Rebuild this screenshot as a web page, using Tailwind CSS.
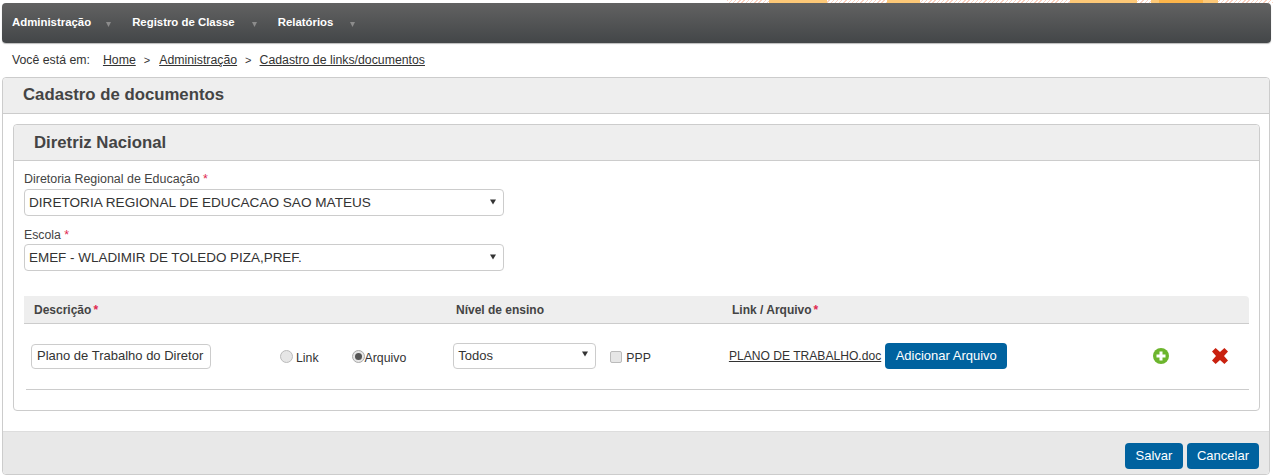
<!DOCTYPE html>
<html lang="pt-BR">
<head>
  <meta charset="UTF-8">
  <title>Cadastro de documentos</title>
  <script src="https://cdn.jsdelivr.net/npm/@tailwindcss/browser@4"></script>
</head>
<body class="bg-white font-['Liberation_Sans',Arial,sans-serif] text-[12.3px] text-[#444] w-[1273px] h-[476px] overflow-hidden relative">
  <!-- faixa do topo atras do menu -->
  <div class="absolute top-0 left-0 w-full h-[3px] flex">
    <div class="w-[727px]"></div>
    <div class="flex-1 bg-[repeating-linear-gradient(135deg,#fbd3c2_0,#fbd3c2_1px,#fff_1px,#fff_3px)] relative">
      <div class="absolute left-[42px] w-[58px] h-full bg-[#fdc877]"></div>
      <div class="absolute left-[160px] w-[33px] h-full bg-[#fdc877]"></div>
      <div class="absolute left-[343px] w-[67px] h-full bg-[#fdc877]"></div>
      <div class="absolute left-[424px] w-[67px] h-full bg-[#fdc877]"></div>
      <div class="absolute left-[432px] w-[44px] h-full bg-[#fdb54a]"></div>
    </div>
  </div>

  <div class="pt-[3px] pl-[2px] pr-[2px]">
    <nav class="h-10 rounded-[4px] bg-linear-to-b from-[#626262] to-[#434648] shadow-[0_1px_1px_#bbb] flex items-center text-white font-bold text-[11.4px]">
      <a class="ml-[10px] mb-[1px]">Administração</a>
      <svg class="ml-[15px] mt-[3px]" width="5" height="5" viewBox="0 0 5 5"><path d="M0 0h5L2.5 5Z" fill="#8c8c8c"/></svg>
      <a class="ml-[21px] mb-[1px]">Registro de Classe</a>
      <svg class="ml-[17px] mt-[3px]" width="5" height="5" viewBox="0 0 5 5"><path d="M0 0h5L2.5 5Z" fill="#8c8c8c"/></svg>
      <a class="ml-[21px] mb-[1px]">Relatórios</a>
      <svg class="ml-[17px] mt-[3px]" width="5" height="5" viewBox="0 0 5 5"><path d="M0 0h5L2.5 5Z" fill="#8c8c8c"/></svg>
    </nav>

    <div class="h-[34px] flex items-center pl-[10px] text-[#333]">
      <span>Você está em:</span>
      <a class="ml-[13px] underline">Home</a>
      <span class="ml-[8px] mr-[9px] text-[11px]">&gt;</span>
      <a class="underline">Administração</a>
      <span class="mx-[8px] text-[11px]">&gt;</span>
      <a class="underline">Cadastro de links/documentos</a>
    </div>

    <main class="w-[1268px] h-[398px] border border-[#ccc] rounded-[4px] flex flex-col">
      <h1 class="h-[36px] shrink-0 bg-[#eee] border-b border-[#ccc] flex items-center pl-5 pb-[2px] text-[16.75px] font-bold text-[#444] rounded-t-[4px]">Cadastro de documentos</h1>

      <div class="flex-1 px-[10px] pt-[10px]">
        <section class="w-[1247px] h-[287px] border border-[#ccc] rounded-[4px] flex flex-col">
          <h2 class="h-[36px] shrink-0 bg-[#eee] border-b border-[#ccc] flex items-center pl-5 text-[16.75px] font-bold text-[#444] rounded-t-[4px]">Diretriz Nacional</h2>

          <div class="px-[10px]">
            <label class="block mt-[11px] leading-[14px] text-[12.45px]">Diretoria Regional de Educação <span class="text-[#e0284f]">*</span></label>
            <div class="mt-[3px] w-[480px] h-[27px] border border-[#ccc] rounded-[4px] flex items-center justify-between pl-1 pr-[7px] text-[#333]">
              <span class="text-[13.6px] pt-[1px]">DIRETORIA REGIONAL DE EDUCACAO SAO MATEUS</span>
              <svg class="mb-[2px]" width="6" height="6" viewBox="0 0 6 6"><path d="M0 .5h6L3 5.5Z" fill="#333"/></svg>
            </div>

            <label class="block mt-[12px] leading-[14px]">Escola <span class="text-[#e0284f]">*</span></label>
            <div class="mt-[2px] w-[480px] h-[27px] border border-[#ccc] rounded-[4px] flex items-center justify-between pl-1 pr-[7px] text-[#333]">
              <span class="text-[13.45px] pt-[1px]">EMEF - WLADIMIR DE TOLEDO PIZA,PREF.</span>
              <svg class="mb-[2px]" width="6" height="6" viewBox="0 0 6 6"><path d="M0 .5h6L3 5.5Z" fill="#333"/></svg>
            </div>

            <div class="mt-[25px] w-[1225px] h-[28px] bg-[#eee] border-b border-[#ccc] rounded-tr-[4px] grid grid-cols-[432px_276px_1fr] items-center font-bold text-xs text-[#444]">
              <span class="pl-[10px]">Descrição<span class="text-[#e0284f] ml-[2px]">*</span></span>
              <span>Nível de ensino</span>
              <span>Link / Arquivo<span class="text-[#e0284f] ml-[2px]">*</span></span>
            </div>

            <div class="ml-[2px] w-[1223px] h-[66px] border-b border-[#ccc] flex items-center text-[#333]">
              <div class="ml-[5px] mb-[1px] w-[180px] h-[25px] border border-[#ccc] rounded-[4px] flex items-center pl-[5px] text-[13px] shrink-0">Plano de Trabalho do Diretor</div>

              <span class="ml-[69px] w-[13px] h-[13px] rounded-full border border-[#bbb] bg-[#e6e6e6] shrink-0"></span>
              <span class="ml-[3px] mt-[3px]">Link</span>

              <span class="ml-[33px] w-[13px] h-[13px] rounded-full border border-[#aaa] bg-[#e6e6e6] flex items-center justify-center shrink-0">
                <span class="w-[7px] h-[7px] rounded-full bg-[#555]"></span>
              </span>
              <span class="mt-[3px]">Arquivo</span>

              <div class="ml-[47px] mb-[1px] w-[143px] h-[26px] border border-[#ccc] rounded-[4px] flex items-center justify-between pl-1 pr-[7px] text-[13px] shrink-0">
                <span>Todos</span>
                <svg class="mb-[4px]" width="6" height="6" viewBox="0 0 6 6"><path d="M0 .5h6L3 5.5Z" fill="#333"/></svg>
              </div>

              <span class="ml-[14px] w-[12px] h-[12px] rounded-[2px] border border-[#bbb] bg-[#e6e6e6] shrink-0"></span>
              <span class="ml-[4px] mt-[3px]">PPP</span>

              <a class="ml-[78px] underline text-[12.1px]">PLANO DE TRABALHO.doc</a>
              <button class="ml-[4px] mb-[1px] w-[122px] h-[26px] bg-[#00629f] rounded-[4px] text-white text-[13px]">Adicionar Arquivo</button>

              <svg class="ml-[146px] mb-[1px]" width="16" height="16" viewBox="0 0 16 16">
                <circle cx="8" cy="8" r="8" fill="#6cb52d"/>
                <path d="M3.5 8h9M8 3.5v9" stroke="#fff" stroke-width="3"/>
              </svg>
              <svg class="ml-[43px] mb-[1px]" width="16" height="16" viewBox="0 0 16 16">
                <path d="M3.6 0 8 4 12.4 0 16 3.6 12 8l4 4.4L12.4 16 8 12 3.6 16 0 12.4 4 8 0 3.6Z" fill="#c9210f"/>
              </svg>
            </div>
          </div>
        </section>
      </div>

      <footer class="h-[43px] shrink-0 bg-[#e8e8e8] border-t border-[#ddd] flex items-center justify-end gap-[4px] pr-[10px] pt-[5px] rounded-b-[4px]">
        <button class="w-[58px] h-[26px] bg-[#00629f] rounded-[4px] text-white text-[13px]">Salvar</button>
        <button class="w-[72px] h-[26px] bg-[#00629f] rounded-[4px] text-white text-[13px]">Cancelar</button>
      </footer>
    </main>
  </div>
</body>
</html>
